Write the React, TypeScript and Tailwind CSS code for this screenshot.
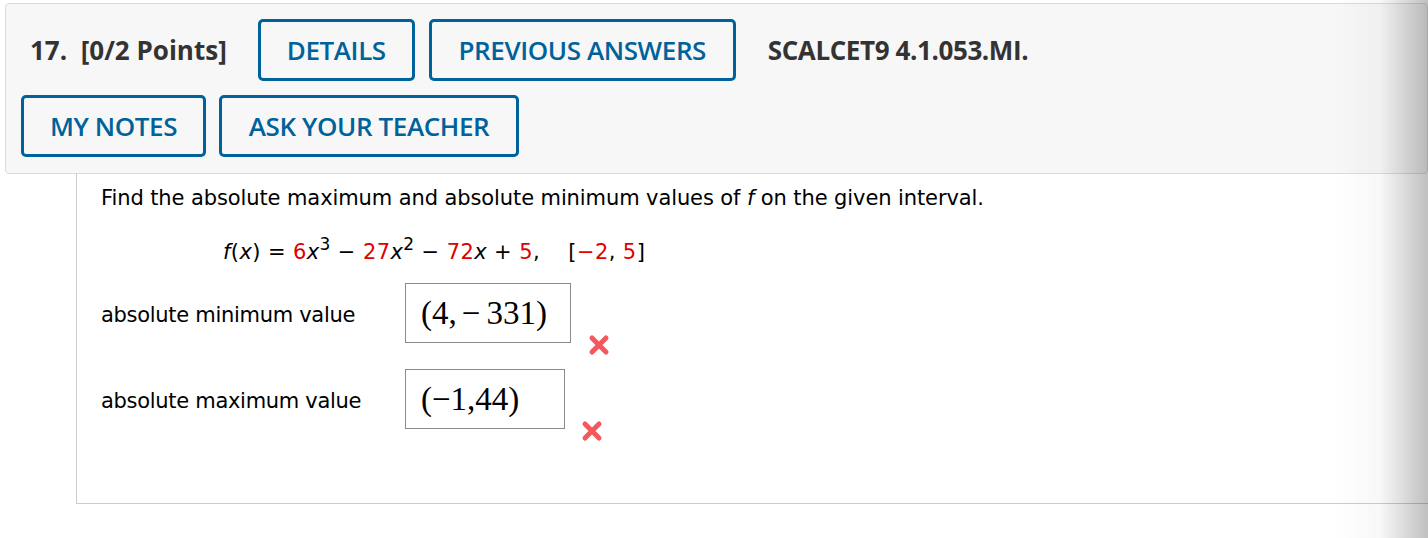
import { ReactNode } from "react";

function OutlineButton({ children, width }: { children: ReactNode; width: string }) {
  return (
    <button
      type="button"
      className={`${width} h-[62px] flex items-center justify-center border-[3px] border-[#00629b] rounded-[5px] text-[#00629b] text-[26px] font-semibold tracking-[-0.4px] bg-transparent`}
    >
      {children}
    </button>
  );
}

function WrongMark() {
  return (
    <svg width="22" height="22" viewBox="0 0 22 22" className="shrink-0">
      <path
        d="M4 4 L18 18 M18 4 L4 18"
        stroke="#f2474d"
        strokeWidth="5"
        strokeLinecap="round"
        opacity="0.9"
      />
    </svg>
  );
}

function AnswerRow({
  label,
  value,
  boxWidth,
  markGap,
}: {
  label: string;
  value: ReactNode;
  boxWidth: string;
  markGap: string;
}) {
  return (
    <div className="flex items-start h-[60px]">
      <div className="w-[304px] h-[60px] pt-[6px] flex items-center text-[21px] tracking-[-0.3px] text-black">
        {label}
      </div>
      <div
        className={`${boxWidth} h-[60px] border border-[#8a8a8a] flex items-center pl-[15px] font-['Liberation_Serif',serif] text-[33px] text-black leading-none`}
      >
        {value}
      </div>
      <div className={`${markGap} h-[60px] pt-[51px]`}>
        <WrongMark />
      </div>
    </div>
  );
}

export default function App() {
  return (
    <div className="relative w-[1428px] h-[538px] bg-white overflow-hidden">
      {/* question header */}
      <div className="ml-[5px] mt-[3px] h-[171px] border border-[#dcdcdc] rounded-[4px] bg-[#f7f7f7] pt-[15px] pl-[15px] font-['Open_Sans',sans-serif]">
        <div className="flex items-center">
          <span className="ml-[9px] mr-[31px] text-[26px] font-bold text-[#333]">
            17.&nbsp; [0/2 Points]
          </span>
          <OutlineButton width="w-[157px]">DETAILS</OutlineButton>
          <div className="w-[14px]" />
          <OutlineButton width="w-[307px]">PREVIOUS ANSWERS</OutlineButton>
          <span className="ml-[32px] text-[26px] font-bold text-[#333] tracking-[-0.4px]">
            SCALCET9 4.1.053.MI.
          </span>
        </div>
        <div className="flex items-center mt-[14px]">
          <OutlineButton width="w-[185px]">MY NOTES</OutlineButton>
          <div className="w-[13px]" />
          <OutlineButton width="w-[300px]">ASK YOUR TEACHER</OutlineButton>
        </div>
      </div>

      {/* question body */}
      <div className="ml-[76px] -mt-px h-[331px] border-l border-b border-[#cccccc] pl-[24px] pt-[11px] font-['DejaVu_Sans',Verdana,sans-serif] text-black">
        <p className="text-[21px] leading-[28px] tracking-[-0.1px]">
          Find the absolute maximum and absolute minimum values of <i>f</i> on the given interval.
        </p>
        <p className="mt-[26px] ml-[122px] text-[21px] leading-[28px] tracking-[0.4px] whitespace-pre">
          <i>f</i>(<i>x</i>) = <span className="text-[#e00000]">6</span>
          <i>x</i>
          <span className="text-[17px] relative -top-[9px]">3</span> − <span className="text-[#e00000]">27</span>
          <i>x</i>
          <span className="text-[17px] relative -top-[9px]">2</span> − <span className="text-[#e00000]">72</span>
          <i>x</i> + <span className="text-[#e00000]">5</span>,{"    "}[<span className="text-[#e00000]">−2</span>,{" "}
          <span className="text-[#e00000]">5</span>]
        </p>
        <div className="mt-[16px] flex flex-col gap-[26px]">
          <AnswerRow
            label="absolute minimum value"
            boxWidth="w-[166px]"
            markGap="ml-[17px]"
            value={
              <span>
                (4,<span className="ml-[5px]">−</span>
                <span className="ml-[6px]">331</span>)
              </span>
            }
          />
          <AnswerRow
            label="absolute maximum value"
            boxWidth="w-[160px]"
            markGap="ml-[16px]"
            value={<span>(−1,44)</span>}
          />
        </div>
      </div>

      {/* right side shade */}
      <div className="absolute right-0 top-0 h-full w-[95px] bg-gradient-to-r from-transparent via-black/[0.03] to-black/25 pointer-events-none" />
    </div>
  );
}
